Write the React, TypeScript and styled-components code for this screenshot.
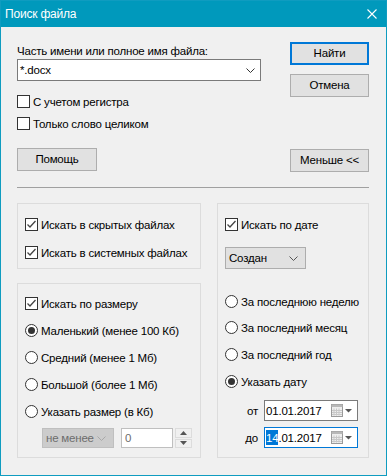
import * as React from 'react'
import styled, {createGlobalStyle} from 'styled-components'

const FONT = `'Liberation Sans', Arial, sans-serif`

const GlobalStyle = createGlobalStyle`
  html, body {
    margin: 0;
    padding: 0;
    background: #f0f0f0;
  }
  body {
    font-family: ${FONT};
    font-size: 11.5px;
    letter-spacing: -0.2px;
    color: #000;
  }
  * { box-sizing: border-box; }
`

const Window = styled.div`
  width: 387px;
  height: 476px;
  border: 1px solid #0f9cc0;
  background: #f0f0f0;
  display: flex;
  flex-direction: column;
`

const TitleBar = styled.div`
  height: 26px;
  flex: none;
  background: #0099bc;
  color: #fff;
  display: flex;
  align-items: center;
  justify-content: space-between;
  padding: 0 9px 1px 4px;
  font-size: 12px;
`

const Body = styled.div`
  flex: 1;
  display: flex;
  flex-direction: column;
  padding: 15px 17px 17px 16px;
`

const Top = styled.div`
  display: flex;
  justify-content: space-between;
`

const Column = styled.div<{$width?: number}>`
  display: flex;
  flex-direction: column;
  width: ${p => (p.$width ? `${p.$width}px` : 'auto')};
  flex: ${p => (p.$width ? 'none' : '1')};
`

const Label = styled.div`
  height: 17px;
  line-height: 17px;
  padding-top: 1px;
`

const TextField = styled.div`
  height: 22px;
  background: #fff;
  border: 1px solid #7a7a7a;
  display: flex;
  align-items: center;
  justify-content: space-between;
  padding: 0 5px 0 2px;
`

const Button = styled.div<{$default?: boolean; $mt?: number; $width?: number}>`
  width: ${p => p.$width ?? 79}px;
  height: 23px;
  margin-top: ${p => (p.$mt === undefined ? 0 : `${p.$mt}px`)};
  background: #e1e1e1;
  border: ${p => (p.$default ? '2px solid #0078d7' : '1px solid #adadad')};
  display: flex;
  align-items: center;
  justify-content: center;
  padding-bottom: 1px;
`

const Row = styled.div<{$mt?: number}>`
  display: flex;
  align-items: center;
  height: 13px;
  gap: 3px;
  margin-top: ${p => p.$mt ?? 0}px;
  white-space: nowrap;
`

const Box = styled.div`
  width: 13px;
  height: 13px;
  flex: none;
  border: 1px solid #333;
  background: #fff;
  display: flex;
  align-items: center;
  justify-content: center;
`

const Radio = styled.div<{$checked?: boolean}>`
  width: 13px;
  height: 13px;
  flex: none;
  border: 1px solid #333;
  border-radius: 50%;
  background: #fff;
  display: flex;
  align-items: center;
  justify-content: center;

  &::after {
    content: '';
    width: 7px;
    height: 7px;
    border-radius: 50%;
    background: ${p => (p.$checked ? '#333' : 'transparent')};
  }
`

const Separator = styled.div`
  height: 1px;
  margin: 15px 0;
  background: #a0a0a0;
`

const Bottom = styled.div`
  flex: 1;
  display: flex;
  gap: 16px;
`

const Group = styled.div<{$pt: number; $mt?: number; $height?: number}>`
  border: 1px solid #dcdcdc;
  padding: ${p => p.$pt}px 0 0 7px;
  margin-top: ${p => p.$mt ?? 0}px;
  ${p => (p.$height ? `height: ${p.$height}px; flex: none;` : 'flex: 1;')}
  display: flex;
  flex-direction: column;
`

const Combo = styled.div<{$disabled?: boolean; $width: number; $height: number; $mt?: number}>`
  width: ${p => p.$width}px;
  height: ${p => p.$height}px;
  margin-top: ${p => p.$mt ?? 0}px;
  background: ${p => (p.$disabled ? '#cccccc' : '#e1e1e1')};
  border: 1px solid ${p => (p.$disabled ? '#bfbfbf' : '#adadad')};
  color: ${p => (p.$disabled ? '#6d6d6d' : '#000')};
  display: flex;
  align-items: center;
  justify-content: space-between;
  padding: 0 7px 0 3px;
  flex: none;
`

const SizeRow = styled.div`
  display: flex;
  align-items: center;
  margin: 10px 0 0 17px;
  height: 20px;
`

const NumberField = styled.div`
  width: 52px;
  height: 20px;
  margin-left: 7px;
  background: #fff;
  border: 1px solid #bfbfbf;
  color: #6d6d6d;
  padding-left: 3px;
  display: flex;
  align-items: center;
`

const Spinner = styled.div`
  width: 17px;
  height: 20px;
  margin-left: 2px;
  display: flex;
  flex-direction: column;
  gap: 1px;
`

const SpinButton = styled.div`
  flex: 1;
  border: 1px solid #dcdcdc;
  background: #f0f0f0;
  display: flex;
  align-items: center;
  justify-content: center;
`

const DateRow = styled.div<{$mt: number}>`
  display: flex;
  align-items: center;
  justify-content: flex-end;
  gap: 6px;
  margin-top: ${p => p.$mt}px;
  padding-right: 10px;
`

const DateField = styled.div<{$focused?: boolean}>`
  width: 94px;
  height: 21px;
  background: #fff;
  border: 1px solid ${p => (p.$focused ? '#0078d7' : '#7a7a7a')};
  display: flex;
  align-items: center;
  padding: 0 5px 0 1px;
`

const DateText = styled.span`
  flex: 1;
`

const Selected = styled.span`
  background: #0078d7;
  color: #fff;
  padding: 2px 0 1px;
`

const Chevron = ({color = '#333'}: {color?: string}) => (
  <svg width="9" height="5" viewBox="0 0 9 5">
    <polyline points="0.5,0.5 4.5,4.5 8.5,0.5" fill="none" stroke={color} strokeWidth="1" />
  </svg>
)

const Check = () => (
  <svg width="11" height="11" viewBox="0 0 11 11">
    <polyline points="1.5,5.5 4,8 9.5,2" fill="none" stroke="#444" strokeWidth="1.3" />
  </svg>
)

const Close = () => (
  <svg width="10" height="10" viewBox="0 0 10 10">
    <path d="M0.5 0.5 L9.5 9.5 M9.5 0.5 L0.5 9.5" stroke="#fff" strokeWidth="1.1" />
  </svg>
)

const CalendarIcon = () => (
  <svg width="21" height="13" viewBox="0 0 21 13">
    <rect x="0.5" y="0.5" width="11" height="12" fill="#eee" stroke="#9a9a9a" />
    <rect x="0.5" y="0.5" width="11" height="2.5" fill="#b8b8b8" stroke="none" />
    <path d="M3 4.5v7 M5.5 4.5v7 M8 4.5v7 M1 6.5h10 M1 8.5h10 M1 10.5h10" stroke="#c8c8c8" strokeWidth="1" />
    <path d="M14 5h7l-3.5 3.5z" fill="#555" />
  </svg>
)

const Triangle = ({up}: {up?: boolean}) => (
  <svg width="7" height="4" viewBox="0 0 7 4">
    <path d={up ? 'M0 4h7L3.5 0z' : 'M0 0h7L3.5 4z'} fill="#555" />
  </svg>
)

const CheckBox = ({checked, label, mt}: {checked?: boolean; label: string; mt?: number}) => (
  <Row $mt={mt}>
    <Box>{checked && <Check />}</Box>
    <span>{label}</span>
  </Row>
)

const RadioButton = ({checked, label, mt}: {checked?: boolean; label: string; mt?: number}) => (
  <Row $mt={mt}>
    <Radio $checked={checked} />
    <span>{label}</span>
  </Row>
)

export default function App() {
  return (
    <>
      <GlobalStyle />
      <Window>
        <TitleBar>
          <span>Поиск файла</span>
          <Close />
        </TitleBar>
        <Body>
          <Top>
            <Column $width={244}>
              <Label>Часть имени или полное имя файла:</Label>
              <TextField>
                <span>*.docx</span>
                <Chevron />
              </TextField>
              <CheckBox label="С учетом регистра" mt={14} />
              <CheckBox label="Только слово целиком" mt={9} />
              <Button $mt={18} $width={80}>Помощь</Button>
            </Column>
            <Column $width={79}>
              <Button $default>Найти</Button>
              <Button $mt={9}>Отмена</Button>
              <Button $mt={52}>Меньше &lt;&lt;</Button>
            </Column>
          </Top>
          <Separator />
          <Bottom>
            <Column $width={184}>
              <Group $pt={14} $height={66}>
                <CheckBox checked label="Искать в скрытых файлах" />
                <CheckBox checked label="Искать в системных файлах" mt={15} />
              </Group>
              <Group $pt={13} $mt={14}>
                <CheckBox checked label="Искать по размеру" />
                <RadioButton checked label="Маленький (менее 100 Кб)" mt={14} />
                <RadioButton label="Средний (менее 1 Мб)" mt={14} />
                <RadioButton label="Большой (более 1 Мб)" mt={14} />
                <RadioButton label="Указать размер (в Кб)" mt={14} />
                <SizeRow>
                  <Combo $disabled $width={72} $height={20}>
                    <span>не менее</span>
                    <Chevron color="#a8a8a8" />
                  </Combo>
                  <NumberField>0</NumberField>
                  <Spinner>
                    <SpinButton><Triangle up /></SpinButton>
                    <SpinButton><Triangle /></SpinButton>
                  </Spinner>
                </SizeRow>
              </Group>
            </Column>
            <Column>
              <Group $pt={14}>
                <CheckBox checked label="Искать по дате" />
                <Combo $width={81} $height={22} $mt={16}>
                  <span>Создан</span>
                  <Chevron color="#555" />
                </Combo>
                <RadioButton label="За последнюю неделю" mt={26} />
                <RadioButton label="За последний месяц" mt={13} />
                <RadioButton label="За последний год" mt={14} />
                <RadioButton checked label="Указать дату" mt={14} />
                <DateRow $mt={12}>
                  <span>от</span>
                  <DateField>
                    <DateText>01.01.2017</DateText>
                    <CalendarIcon />
                  </DateField>
                </DateRow>
                <DateRow $mt={6}>
                  <span>до</span>
                  <DateField $focused>
                    <DateText><Selected>14</Selected>.01.2017</DateText>
                    <CalendarIcon />
                  </DateField>
                </DateRow>
              </Group>
            </Column>
          </Bottom>
        </Body>
      </Window>
    </>
  )
}
